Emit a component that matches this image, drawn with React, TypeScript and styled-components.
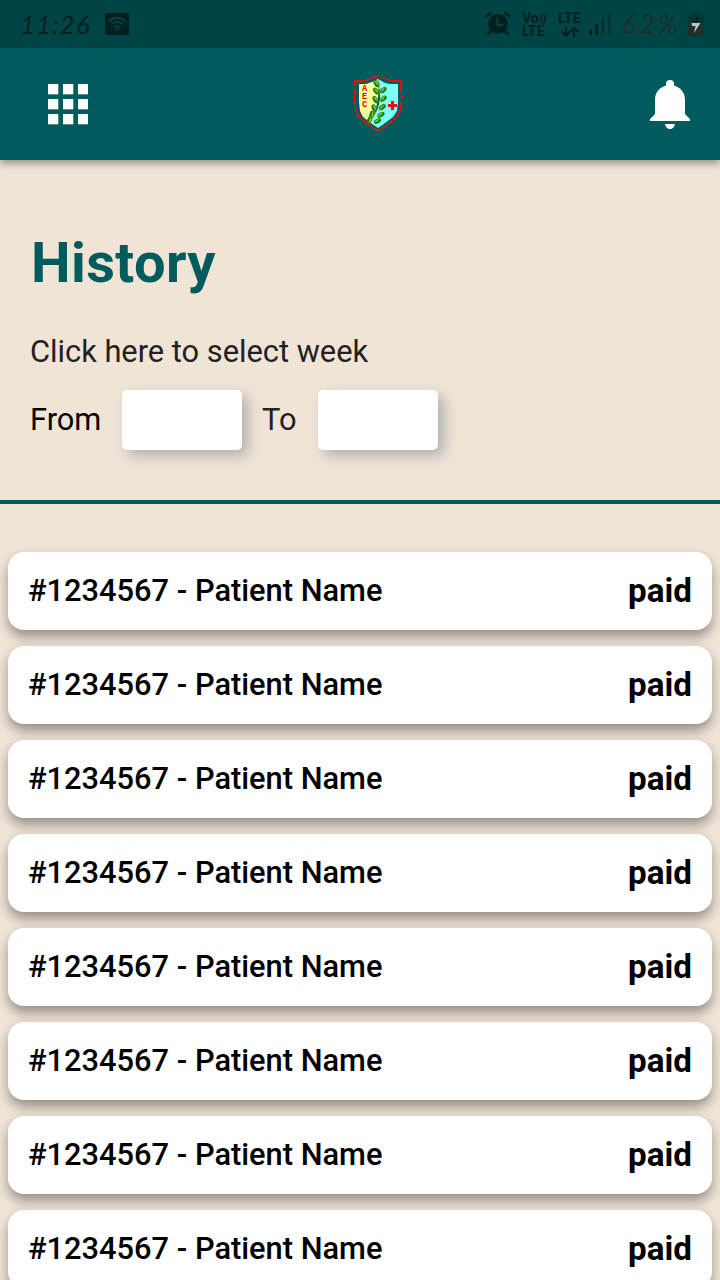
import React from 'react';
import styled, { createGlobalStyle } from 'styled-components';

const GlobalStyle = createGlobalStyle`
  * { box-sizing: border-box; }
  body { margin: 0; background: #f0e4d7; font-family: Roboto, sans-serif; overflow: hidden; }
  svg { flex: none; display: block; }
`;

const Screen = styled.div`
  width: 720px;
  height: 1280px;
  overflow: hidden;
  display: flex;
  flex-direction: column;
  background: #f0e4d7;
`;

const StatusBar = styled.div`
  height: 48px;
  flex: none;
  display: flex;
  align-items: center;
  justify-content: space-between;
  padding: 0 15px 0 20px;
  background: #004545;
`;

const StatusGroup = styled.div<{ $gap: number }>`
  display: flex;
  align-items: center;
  gap: ${({ $gap }) => $gap}px;
`;

const Scribble = styled.span<{ $width: number; $color: string; $spacing: number; $size: number }>`
  width: ${({ $width }) => $width}px;
  font: italic 400 ${({ $size }) => $size}px/48px Lato, sans-serif;
  letter-spacing: ${({ $spacing }) => $spacing}px;
  white-space: nowrap;
  color: ${({ $color }) => $color};
`;

const AppBar = styled.header`
  height: 112px;
  flex: none;
  display: flex;
  align-items: center;
  padding: 0 30px 0 48px;
  background: #005c5c;
  box-shadow: 0 3px 8px rgba(0, 0, 0, 0.4);
  clip-path: inset(0 0 -20px 0);
  z-index: 1;
`;

const CrestSlot = styled.div`
  display: flex;
  flex: 1;
  padding-left: 252px;
`;

const Filter = styled.section`
  height: 344px;
  flex: none;
  display: flex;
  flex-direction: column;
  padding: 70px 30px 0;
  border-bottom: 4px solid #005c5c;
`;

const Title = styled.h1`
  margin: 0 0 0 1px;
  font-size: 56px;
  line-height: 66px;
  font-weight: 700;
  letter-spacing: 0.4px;
  color: #005c5c;
`;

const Hint = styled.p`
  margin: 38px 0 0;
  font-size: 30.8px;
  line-height: 36px;
  color: #212121;
`;

const Range = styled.div`
  display: flex;
  align-items: center;
  margin-top: 20px;
`;

const RangeLabel = styled.label<{ $width: number; $color: string }>`
  width: ${({ $width }) => $width}px;
  font-size: 30.8px;
  line-height: 60px;
  color: ${({ $color }) => $color};
`;

const DateBox = styled.div`
  width: 120px;
  height: 60px;
  margin-right: 20px;
  border-radius: 5px;
  background: #fff;
  box-shadow: 6px 6px 14px rgba(0, 40, 70, 0.27);
`;

const List = styled.main`
  flex: 1;
  display: flex;
  flex-direction: column;
  gap: 16px;
  padding: 48px 8px 0;
`;

const Card = styled.article`
  height: 78px;
  flex: none;
  display: flex;
  align-items: center;
  justify-content: space-between;
  padding: 0 20px;
  border-radius: 16px;
  background: #fff;
  color: #000;
  box-shadow: 0 8px 12px -2px rgba(0, 0, 0, 0.25), 0 5px 14px rgba(0, 0, 0, 0.2);
`;

const Patient = styled.span`
  font-size: 30.8px;
  font-weight: 500;
  line-height: 78px;
`;

const State = styled.span`
  font-size: 33.2px;
  font-weight: 700;
  line-height: 78px;
`;

const CastIcon = () => (
  <svg width="24" height="24" viewBox="0 0 24 24">
    <rect width="24" height="22" y="1" rx="2" fill="#002020" />
    <g fill="none" stroke="#004545" strokeWidth="1.7">
      <path d="M3.3 9.5Q12 2 20.7 9.5M6 12.5Q12 7.2 18 12.5M8.8 15.3Q12 12.3 15.2 15.3" />
    </g>
    <circle cx="12" cy="17.3" r="1.3" fill="#004545" />
  </svg>
);

const AlarmIcon = () => (
  <svg width="26" height="26" viewBox="0 0 26 26">
    <g stroke="#002020" strokeWidth="2.6" fill="none">
      <path d="M1 6L6.5 1.4M19.5 1.4L25 6M6 20L2.5 23.5M20 20l3.5 3.5" />
    </g>
    <circle cx="13" cy="13" r="10" fill="#002020" />
    <path d="M12.5 6.5V14H18" fill="none" stroke="#004545" strokeWidth="2" />
  </svg>
);

const NetworkStack = styled.div<{ $width: number }>`
  display: flex;
  flex-direction: column;
  width: ${({ $width }) => $width}px;
  height: 26px;
  margin-top: 2px;
  white-space: nowrap;
`;

const NetworkLine = styled.div`
  display: flex;
  align-items: center;
  height: 13px;
  font: 700 14px/13px Roboto, sans-serif;
  color: #002020;
`;

const VolteIcon = () => (
  <NetworkStack $width={25}>
    <NetworkLine>
      Vo
      <svg width="8" height="13" viewBox="0 0 8 13">
        <path d="M0.8 3q2.8 3.5 0 7.5M4 1.3q4 5.2 0 10.6" fill="none" stroke="#002020" strokeWidth="1.6" />
      </svg>
    </NetworkLine>
    <NetworkLine>LTE</NetworkLine>
  </NetworkStack>
);

const LteIcon = () => (
  <NetworkStack $width={20}>
    <NetworkLine>LTE</NetworkLine>
    <NetworkLine>
      <svg width="24" height="13" viewBox="0 0 24 13">
        <path d="M8 2v8M4 6.5L8 10.5L12 6.5M16 12V3M12 7l4-4l4 4" fill="none" stroke="#002020" strokeWidth="2" />
      </svg>
    </NetworkLine>
  </NetworkStack>
);

const SignalIcon = () => (
  <svg width="22" height="24" viewBox="0 0 22 24">
    <path d="M0.5 18h2.6v5H.5zM6.5 12h2.6v11H6.5z" fill="#002020" />
    <path d="M12.7 6h2.6v17h-2.6zM18.9 1h2.6v22h-2.6z" fill="#003434" />
  </svg>
);

const BatteryIcon = () => (
  <svg width="18" height="26" viewBox="0 0 18 26">
    <path d="M5.5 1h6v3H17v7H1V4h4.5z" fill="#003838" />
    <path d="M1 11h16v14H1z" fill="#1f3030" />
    <path d="M9.5 6H12l-1.5 5.5H4.5z" fill="#002525" />
    <path d="M4.5 12h9l-6.5 10 1.5-7H5z" fill="#b9c9c9" />
  </svg>
);

const GridIcon = () => (
  <svg width="40" height="42" viewBox="0 0 40 42">
    {[1, 16, 31].map((y) =>
      [0, 15, 30].map((x) => <rect key={`${x}-${y}`} x={x} y={y} width="10.3" height="10.3" fill="#fff" />),
    )}
  </svg>
);

const leaves = [
  [36.3, 17.5, 60], [36, 25, 55], [35.3, 33.5, 60], [34, 42, 75], [31.7, 48.7, 100], [29.5, 54, 110],
  [43.3, 24, -42], [43.3, 32.7, -38], [42.3, 41.2, -35], [41, 48.7, -30], [37.5, 55, -28],
];

const Crest = () => (
  <svg width="76" height="76" viewBox="0 0 76 76">
    <path
      d="M38 9.5L47 13.5L53 15H61.5L60.5 20L62 32L60 44L57 51L50 57L38 65.3L26 57L19 51L16 44L14.5 32L15.5 20L14.5 15H23L29 13.5Z"
      fill="none" stroke="#f30808" strokeWidth="1.4" shapeRendering="crispEdges"
    />
    <path d="M38 13l-6 3-6 2h-7v18l1 9 3 6 8 6 7 5q-7-5-4-14 6-15 4-35" fill="#ffff9b" />
    <path d="M38 13l7 4 5 1h8v18l-1 9-4 6-8 6-7 5-8-7q9-10 10-23 1-11-2-20z" fill="#80ffff" />
    <path d="M38.5 15q4 21 0 28-4 9-9 14" fill="none" stroke="#c5e890" strokeWidth="0.8" />
    {leaves.map(([x, y, angle], i) => (
      <g key={i} transform={`translate(${x} ${y}) rotate(${angle})`}>
        <ellipse rx="3.9" ry="2.3" fill="#108010" />
        <path d="M-3.8 0Q0-2.6 3-1L0 .3z" fill="#94c818" />
      </g>
    ))}
    <g fill="#e00000" fontFamily="Liberation Mono, monospace" fontSize="8.5" fontWeight="700">
      <text x="22" y="25">A</text>
      <text x="22" y="33">E</text>
      <text x="22" y="41">C</text>
    </g>
    <path d="M51 35h3v3h3v3h-3v3h-3v-3h-3v-3h3z" fill="#f30808" />
  </svg>
);

const BellIcon = () => (
  <svg width="40" height="50" viewBox="0 0 40 50">
    <path
      d="M20 1a4 4 0 0 0-4 4v1.5C9 8.5 5 14 5 21v14L0 40v2h40v-2l-5-5V21c0-7-4-12.5-11-14.5V5a4 4 0 0 0-4-4zM15 45h10q-1 5-5 5t-5-5z"
      fill="#fff"
    />
  </svg>
);

const records = Array.from({ length: 8 }, () => ({ id: '#1234567', name: 'Patient Name', state: 'paid' }));

export default function App() {
  return (
    <>
      <GlobalStyle />
      <Screen>
        <StatusBar>
          <StatusGroup $gap={15}>
            <Scribble $width={70} $color="#002020" $spacing={1} $size={26}>11:26</Scribble>
            <CastIcon />
          </StatusGroup>
          <StatusGroup $gap={11}>
            <AlarmIcon />
            <VolteIcon />
            <LteIcon />
            <SignalIcon />
            <Scribble $width={54} $color="#1f3030" $spacing={3} $size={27}>62%</Scribble>
            <BatteryIcon />
          </StatusGroup>
        </StatusBar>
        <AppBar>
          <GridIcon />
          <CrestSlot>
            <Crest />
          </CrestSlot>
          <BellIcon />
        </AppBar>
        <Filter>
          <Title>History</Title>
          <Hint>Click here to select week</Hint>
          <Range>
            <RangeLabel $width={92} $color="#000">From</RangeLabel>
            <DateBox />
            <RangeLabel $width={56} $color="#212121">To</RangeLabel>
            <DateBox />
          </Range>
        </Filter>
        <List>
          {records.map((record, index) => (
            <Card key={index}>
              <Patient>{record.id} - {record.name}</Patient>
              <State>{record.state}</State>
            </Card>
          ))}
        </List>
      </Screen>
    </>
  );
}
